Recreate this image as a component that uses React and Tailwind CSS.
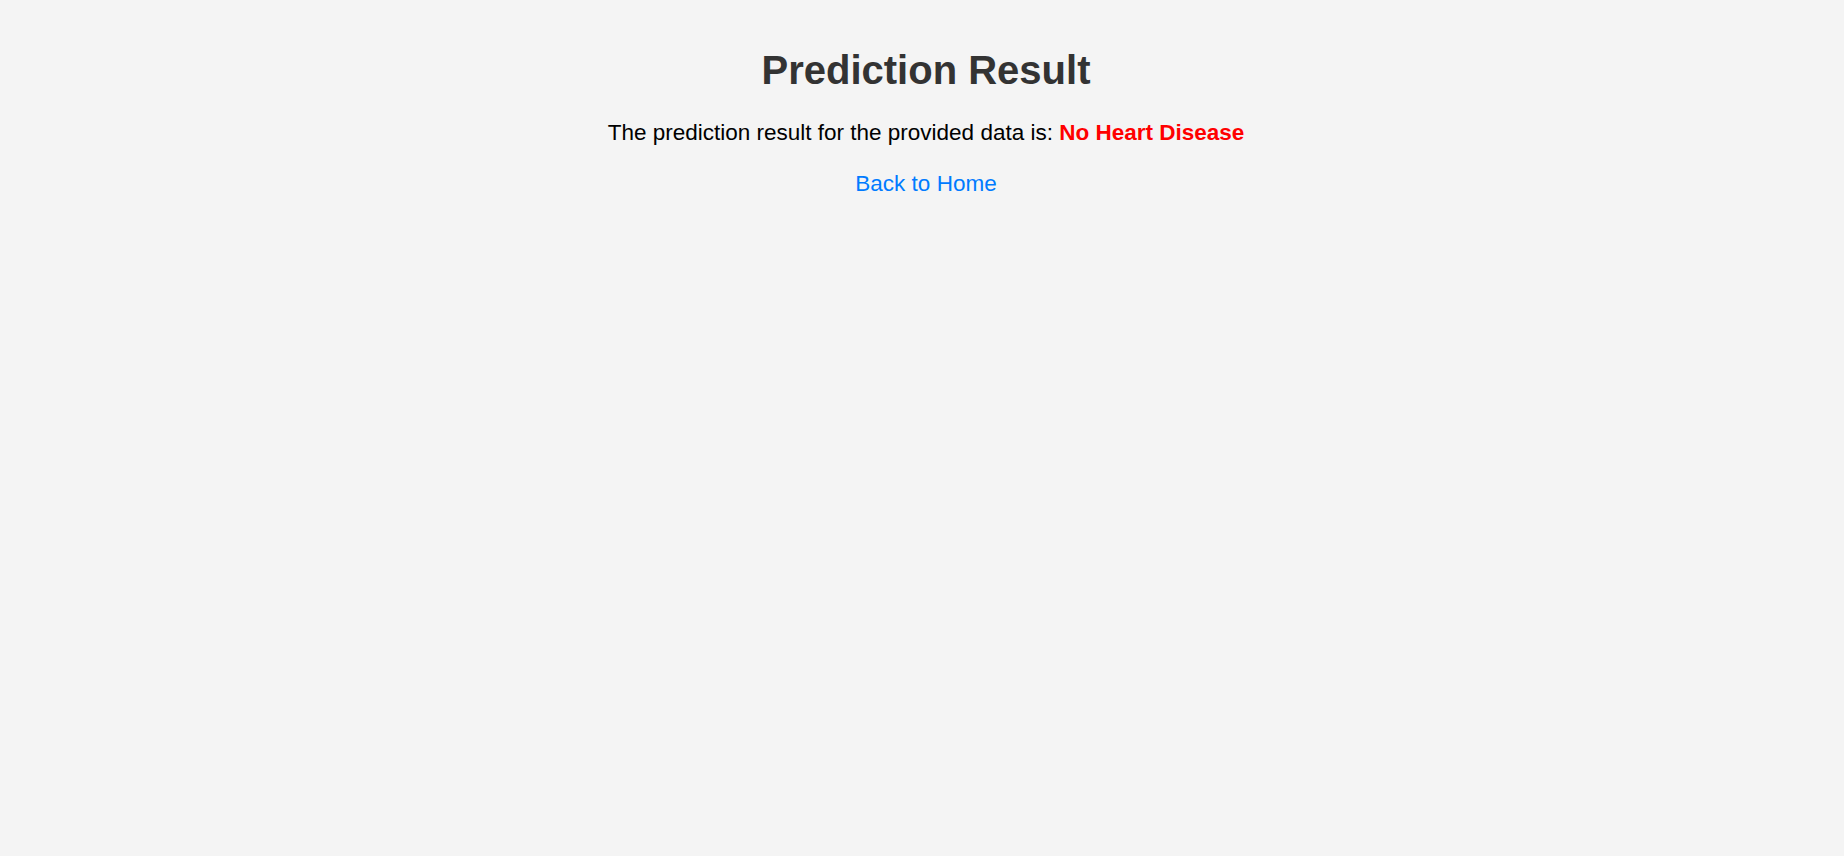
import React from 'react'

const App = () => {
  return (
    <div className="min-h-screen w-full bg-[#f4f4f4] pt-5 pl-2 text-center" style={{ fontFamily: '"Liberation Sans", Arial, sans-serif' }}>
      <h1 className="mt-[27px] mb-[27px] text-[40px] font-bold leading-[46px] text-[#333333]">
        Prediction Result
      </h1>
      <p className="mb-[25px] text-[22.5px] leading-[26px] text-black">
        The prediction result for the provided data is:{' '}
        <span className="font-bold text-[#ff0000]">No Heart Disease</span>
      </p>
      <a href="#" className="text-[22.5px] leading-[26px] text-[#007bff] no-underline">
        Back to Home
      </a>
    </div>
  )
}

export default App
